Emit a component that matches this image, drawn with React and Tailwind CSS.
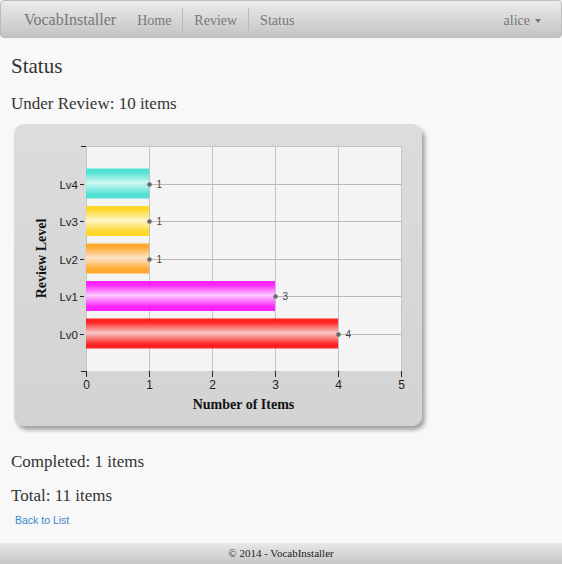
import React from 'react';

// Review-level chart data, top row first (same order as the picture).
const LEVELS = [
    { label: 'Lv4', value: 1, color: '#42dfd0', light: '#cdf8f3' },
    { label: 'Lv3', value: 1, color: '#ffd51a', light: '#fff6c4' },
    { label: 'Lv2', value: 1, color: '#ffa41f', light: '#ffe2c6' },
    { label: 'Lv1', value: 3, color: '#ff10ff', light: '#ffc8ff' },
    { label: 'Lv0', value: 4, color: '#ff1010', light: '#f9c4c4' },
];

// plot geometry inside the card svg
const X0 = 72;
const Y0 = 22;
const UNIT = 63;
const ROW = 37.5;
const PLOT_W = UNIT * 5;
const PLOT_H = ROW * 6;
const SANS = '"Liberation Sans", Arial, sans-serif';
const SERIF = '"Liberation Serif", "Times New Roman", serif';

const ReviewChart = () => (
    <svg width="408" height="302" className="block">
        <defs>
            {LEVELS.map(l => (
                <linearGradient key={l.label} id={`g-${l.label}`} x1="0" y1="0" x2="0" y2="1">
                    <stop offset="0%" stopColor={l.color} />
                    <stop offset="12%" stopColor={l.color} />
                    <stop offset="48%" stopColor={l.light} />
                    <stop offset="86%" stopColor={l.color} />
                    <stop offset="100%" stopColor={l.color} />
                </linearGradient>
            ))}
        </defs>

        {/* plot background + grid */}
        <rect x={X0} y={Y0} width={PLOT_W} height={PLOT_H} fill="#f4f4f4" />
        {[0, 1, 2, 3, 4, 5].map(i => (
            <line key={`v${i}`} x1={X0 + i * UNIT + 0.5} y1={Y0} x2={X0 + i * UNIT + 0.5} y2={Y0 + PLOT_H} stroke="#c4c4c4" />
        ))}
        <line x1={X0} y1={Y0 + 0.5} x2={X0 + PLOT_W} y2={Y0 + 0.5} stroke="#c4c4c4" />
        {LEVELS.map((l, i) => {
            const cy = Math.round(Y0 + ROW * (i + 1)) + 0.5;
            return <line key={`h${i}`} x1={X0} y1={cy} x2={X0 + PLOT_W} y2={cy} stroke="#b8b8b8" />;
        })}

        {/* bars */}
        {LEVELS.map((l, i) => {
            const cy = Y0 + ROW * (i + 1);
            return (
                <rect
                    key={`b${i}`}
                    x={X0}
                    y={cy - 15}
                    width={l.value * UNIT}
                    height={30}
                    fill={`url(#g-${l.label})`}
                    opacity="0.92"
                />
            );
        })}

        {/* value markers */}
        {LEVELS.map((l, i) => {
            const cy = Math.round(Y0 + ROW * (i + 1)) + 0.5;
            const cx = X0 + l.value * UNIT + 0.5;
            return (
                <g key={`p${i}`}>
                    <circle cx={cx} cy={cy} r="2.3" fill="#6a6a6a" />
                    <text x={cx + 7} y={cy + 3.5} fontSize="10" fill="#444" fontFamily={SANS}>{l.value}</text>
                </g>
            );
        })}

        {/* y axis */}
        <line x1={X0 - 5} y1={Y0 + 0.5} x2={X0} y2={Y0 + 0.5} stroke="#222" />
        <line x1={X0 - 5} y1={Y0 + PLOT_H + 0.5} x2={X0} y2={Y0 + PLOT_H + 0.5} stroke="#222" />
        {LEVELS.map((l, i) => {
            const cy = Math.round(Y0 + ROW * (i + 1)) + 0.5;
            return (
                <g key={`y${i}`}>
                    <line x1={X0 - 6} y1={cy} x2={X0 - 2} y2={cy} stroke="#222" />
                    <text x={X0 - 8} y={cy + 4} fontSize="11.5" textAnchor="end" fill="#222" fontFamily={SANS}>{l.label}</text>
                </g>
            );
        })}
        <text
            transform={`translate(32 ${Y0 + PLOT_H / 2}) rotate(-90)`}
            textAnchor="middle"
            fontSize="14"
            fontWeight="bold"
            fill="#111"
            fontFamily={SERIF}
        >
            Review Level
        </text>

        {/* x axis */}
        {[0, 1, 2, 3, 4, 5].map(i => (
            <g key={`x${i}`}>
                <line x1={X0 + i * UNIT + 0.5} y1={Y0 + PLOT_H} x2={X0 + i * UNIT + 0.5} y2={Y0 + PLOT_H + 6} stroke="#222" />
                <text x={X0 + i * UNIT + 0.5} y={Y0 + PLOT_H + 18} fontSize="12" textAnchor="middle" fill="#222" fontFamily={SANS}>{i}</text>
            </g>
        ))}
        <text x={X0 + PLOT_W / 2} y={Y0 + PLOT_H + 38} textAnchor="middle" fontSize="14" fontWeight="bold" fill="#111" fontFamily={SERIF}>
            Number of Items
        </text>
    </svg>
);

const NavSep = () => <span className="w-px h-[23px] bg-[#b9b9b9]" />;

export default function App() {
    return (
        <div className="min-h-[564px] flex flex-col bg-[#f8f8f8] text-[#333] font-['Liberation_Serif','Times_New_Roman',serif]">
            {/* navbar */}
            <div className="h-[38px] flex items-center pt-[1px] bg-gradient-to-b from-[#ececec] to-[#c3c3c3] border border-[#bcbcbc] rounded-[4px] text-[#777]">
                <span className="pl-[23px] pt-[1px] text-[16px]">VocabInstaller</span>
                <div className="flex items-center ml-[10px] text-[14px]">
                    <span className="px-[11px] pt-[1px]">Home</span>
                    <NavSep />
                    <span className="px-[11px] pt-[1px]">Review</span>
                    <NavSep />
                    <span className="px-[11px] pt-[1px]">Status</span>
                </div>
                <div className="ml-auto pr-[20px] pt-[1px] flex items-center gap-[5px] text-[14px]">
                    <span>alice</span>
                    <span className="w-0 h-0 border-x-[3.5px] border-x-transparent border-t-[4px] border-t-[#777] mt-[1px]" />
                </div>
            </div>

            {/* content */}
            <div className="pl-[11px]">
                <h2 className="mt-[17px] text-[21px] leading-[23px]">Status</h2>
                <p className="mt-[14px] text-[17px] leading-[24px]">Under Review: 10 items</p>
                <div className="mt-[8px] ml-[3px] w-[408px] h-[302px] rounded-[10px] bg-gradient-to-b from-[#dcdcdc] to-[#d3d3d3] shadow-[3px_4px_4px_rgba(0,0,0,0.35)]">
                    <ReviewChart />
                </div>
                <p className="mt-[24px] text-[17px] leading-[24px]">Completed: 1 items</p>
                <p className="mt-[10px] text-[17px] leading-[24px]">Total: 11 items</p>
                <a className="block mt-[5px] ml-[4px] text-[10.5px] leading-[15px] text-[#3a87c8] font-['Liberation_Sans',Arial,sans-serif]">
                    Back to List
                </a>
            </div>

            {/* footer */}
            <div className="mt-auto h-[21px] flex items-center justify-center bg-gradient-to-b from-[#e8e8e8] to-[#c6c6c6] text-[11px] text-[#222]">
                © 2014 - VocabInstaller
            </div>
        </div>
    );
}
